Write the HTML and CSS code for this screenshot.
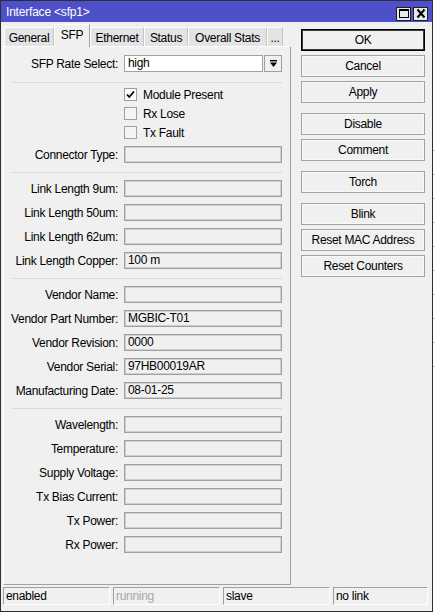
FILE: index.html
```html
<!DOCTYPE html>
<html>
<head>
<meta charset="utf-8">
<link rel="stylesheet" href="styles.css">
</head>
<body>
<div class="screen">
  <div class="window">
    <div class="titlebar">
      <span class="title">Interface &lt;sfp1&gt;</span>
      <div class="tb-buttons">
        <span class="tb-btn"><svg width="12" height="11" viewBox="0 0 12 11"><rect x="1.5" y="1.5" width="9" height="8" fill="none" stroke="#000" stroke-width="1"/><line x1="1" y1="2" x2="11" y2="2" stroke="#000" stroke-width="2"/></svg></span>
        <span class="tb-btn"><svg width="12" height="11" viewBox="0 0 12 11"><path d="M2.5 1.5 L9.5 9.5 M9.5 1.5 L2.5 9.5" stroke="#000" stroke-width="2"/></svg></span>
      </div>
    </div>
    <div class="main">
      <div class="left">
        <div class="tabs">
          <div class="tab t-general">General</div>
          <div class="tab selected t-sfp">SFP</div>
          <div class="tab t-eth">Ethernet</div>
          <div class="tab t-status">Status</div>
          <div class="tab t-overall">Overall Stats</div>
          <div class="tab t-more">...</div>
        </div>
        <div class="panel">
          <div class="row">
            <label class="lbl">SFP Rate Select:</label>
            <div class="combo">
              <div class="field white combo-field">high</div>
              <div class="combo-btn"><svg width="9" height="9" viewBox="0 0 9 9"><rect x="1" y="1" width="7" height="1.4" fill="#000"/><path d="M1 3.5 H8 L4.5 8 Z" fill="#000"/></svg></div>
            </div>
          </div>
          <div class="sep sep-first"></div>
          <div class="checks">
            <div class="check"><span class="box checked"><svg width="11" height="11" viewBox="0 0 11 11"><path d="M2 5.5 L4.3 8 L9 2.5" fill="none" stroke="#000" stroke-width="1.8"/></svg></span><span>Module Present</span></div>
            <div class="check"><span class="box"></span><span>Rx Lose</span></div>
            <div class="check"><span class="box"></span><span>Tx Fault</span></div>
          </div>
          <div class="row r-conn">
            <label class="lbl">Connector Type:</label>
            <div class="field"></div>
          </div>
          <div class="sep"></div>
          <div class="group">
            <div class="row"><label class="lbl">Link Length 9um:</label><div class="field"></div></div>
            <div class="row"><label class="lbl">Link Length 50um:</label><div class="field"></div></div>
            <div class="row"><label class="lbl">Link Length 62um:</label><div class="field"></div></div>
            <div class="row"><label class="lbl">Link Length Copper:</label><div class="field">100 m</div></div>
          </div>
          <div class="sep"></div>
          <div class="group">
            <div class="row"><label class="lbl">Vendor Name:</label><div class="field"></div></div>
            <div class="row"><label class="lbl">Vendor Part Number:</label><div class="field">MGBIC-T01</div></div>
            <div class="row"><label class="lbl">Vendor Revision:</label><div class="field">0000</div></div>
            <div class="row"><label class="lbl">Vendor Serial:</label><div class="field">97HB00019AR</div></div>
            <div class="row"><label class="lbl">Manufacturing Date:</label><div class="field">08-01-25</div></div>
          </div>
          <div class="sep"></div>
          <div class="group">
            <div class="row"><label class="lbl">Wavelength:</label><div class="field"></div></div>
            <div class="row"><label class="lbl">Temperature:</label><div class="field"></div></div>
            <div class="row"><label class="lbl">Supply Voltage:</label><div class="field"></div></div>
            <div class="row"><label class="lbl">Tx Bias Current:</label><div class="field"></div></div>
            <div class="row"><label class="lbl">Tx Power:</label><div class="field"></div></div>
            <div class="row"><label class="lbl">Rx Power:</label><div class="field"></div></div>
          </div>
        </div>
      </div>
      <div class="buttons">
        <div class="bgroup">
          <div class="btn default">OK</div>
          <div class="btn">Cancel</div>
          <div class="btn">Apply</div>
        </div>
        <div class="bgroup">
          <div class="btn">Disable</div>
          <div class="btn">Comment</div>
        </div>
        <div class="bgroup">
          <div class="btn">Torch</div>
        </div>
        <div class="bgroup">
          <div class="btn">Blink</div>
          <div class="btn">Reset MAC Address</div>
          <div class="btn">Reset Counters</div>
        </div>
      </div>
    </div>
    <div class="statusbar">
      <div class="cell c1">enabled</div>
      <div class="cell c2 dim">running</div>
      <div class="cell c3">slave</div>
      <div class="cell c4">no link</div>
    </div>
  </div>
  <div class="behind">
    <div class="bline"></div><div class="bline"></div><div class="bline"></div><div class="bline"></div><div class="bline"></div><div class="bline"></div><div class="bline"></div><div class="bline"></div><div class="bline"></div><div class="bline"></div>
  </div>
</div>
</body>
</html>
```
FILE: styles.css
```css
* { box-sizing: border-box; }
html, body { margin: 0; padding: 0; }
body {
  background: #ffffff;
  font-family: "Liberation Sans", Arial, sans-serif;
  font-size: 12px;
  color: #000;
  letter-spacing: -0.3px;
}
.screen {
  display: flex;
  width: 435px;
  height: 612px;
  overflow: hidden;
}
.window {
  width: 433px;
  height: 612px;
  flex: none;
  border: 1px solid #2e2e2e;
  background: #f0f0f0;
  display: flex;
  flex-direction: column;
}
.behind {
  flex: 1;
  background: #ffffff;
  padding-top: 150px;
  display: flex;
  flex-direction: column;
  gap: 23px;
}
.bline { height: 1px; background: #c8c8c8; }

.titlebar {
  height: 21px;
  background: #4e50c9;
  display: flex;
  align-items: center;
  justify-content: space-between;
  padding-left: 5px;
  padding-right: 4px;
}
.title {
  color: #fff;
  font-size: 12px;
  letter-spacing: -0.2px;
}
.tb-buttons { display: flex; gap: 2px; margin-top: 4px; }
.tb-btn {
  width: 15px;
  height: 14px;
  background: #e8e8e8;
  border: 1px solid #202020;
  display: flex;
  align-items: center;
  justify-content: center;
}

.main {
  display: flex;
  padding-left: 2px;
  height: 563px;
}
.left {
  width: 288px;
  display: flex;
  flex-direction: column;
}
.tabs {
  margin-top: 2px;
  height: 22px;
  display: flex;
  align-items: flex-end;
  padding-left: 1px;
}
.tab {
  height: 19px;
  background: #e3e3e3;
  border-top: 1px solid #ffffff;
  border-left: 1px solid #ffffff;
  border-right: 1px solid #c4c4c4;
  display: flex;
  align-items: center;
  justify-content: center;
  padding-top: 1px;
}
.tab.selected {
  height: 23px;
  background: #f0f0f0;
  margin-bottom: -1px;
  position: relative;
  z-index: 1;
  padding-top: 0;
  padding-bottom: 3px;
  border-right: 1px solid #a0a0a0;
}
.t-general { width: 50px; }
.t-sfp { width: 36px; }
.t-eth { width: 54px; }
.t-status { width: 44px; }
.t-overall { width: 79px; }
.t-more { width: 16px; }

.panel {
  height: 539px;
  border-top: 1px solid #ffffff;
  border-left: 1px solid #ffffff;
  border-right: 1px solid #a0a0a0;
  border-bottom: 1px solid #a0a0a0;
  padding-top: 8px;
}
.row {
  display: flex;
  align-items: center;
  height: 17px;
}
.lbl {
  width: 114px;
  text-align: right;
  margin-right: 6px;
  white-space: nowrap;
}
.field {
  width: 158px;
  height: 17px;
  border: 1px solid #a0a0a0;
  box-shadow: inset 0 0 0 1px #cfcfcf;
  background: #f0f0f0;
  padding-left: 3px;
  line-height: 15px;
  white-space: nowrap;
}
.field.white { background: #ffffff; box-shadow: none; }
.combo { display: flex; width: 158px; }
.combo-field { width: 139px; }
.combo-btn {
  width: 18px;
  height: 17px;
  margin-left: 1px;
  border: 1px solid #a0a0a0;
  background: #f0f0f0;
  display: flex;
  align-items: center;
  justify-content: center;
}

.sep {
  height: 1px;
  background: #dadada;
  margin: 9px 8px 7px 8px;
}
.sep-first { margin-top: 10px; margin-bottom: 2px; }
.checks { display: flex; flex-direction: column; }
.check {
  height: 19px;
  display: flex;
  align-items: center;
  padding-left: 120px;
  gap: 6px;
}
.box {
  width: 13px;
  height: 13px;
  border: 1px solid #a0a0a0;
  background: #f4f4f4;
  display: flex;
  align-items: center;
  justify-content: center;
}
.box.checked { background: #fcfcfc; }
.r-conn { margin-top: 4px; }
.group { display: flex; flex-direction: column; gap: 7px; }

.buttons {
  width: 124px;
  margin-left: 10px;
  padding-top: 7px;
  display: flex;
  flex-direction: column;
  gap: 10px;
}
.bgroup { display: flex; flex-direction: column; gap: 4px; }
.btn {
  height: 22px;
  border: 1px solid #a3a3a3;
  box-shadow: inset 0 0 0 1px #f8f8f8;
  background: #f0f0f0;
  display: flex;
  align-items: center;
  justify-content: center;
  white-space: nowrap;
}
.btn.default {
  border: 1px solid #000;
  box-shadow: inset 0 0 0 1px #3a3a3a;
}

.statusbar {
  margin-top: 2px;
  height: 18px;
  display: flex;
  gap: 3px;
  padding-left: 2px;
}
.cell {
  height: 18px;
  border-top: 1px solid #a0a0a0;
  border-left: 1px solid #a0a0a0;
  border-bottom: 1px solid #ffffff;
  border-right: 1px solid #ffffff;
  padding-left: 2px;
  line-height: 16px;
  white-space: nowrap;
}
.c1, .c2, .c3 { width: 107px; }
.c4 { width: 95px; }
.dim { color: #a8a8a8; }
```
